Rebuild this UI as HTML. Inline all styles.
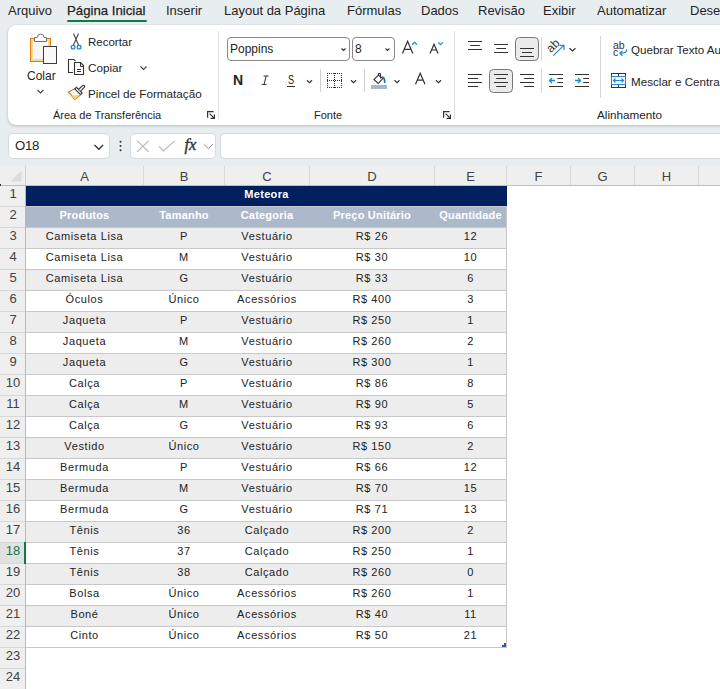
<!DOCTYPE html>
<html><head><meta charset="utf-8">
<style>
*{margin:0;padding:0;box-sizing:border-box}
html,body{width:720px;height:689px;overflow:hidden;background:#e8edf0;font-family:"Liberation Sans",sans-serif;color:#242424;position:relative}
.a{position:absolute;white-space:nowrap}
.tab{position:absolute;top:3px;font-size:13px;line-height:16px;color:#242424}
#ribbon{position:absolute;left:8px;top:25px;width:740px;height:100px;background:#fff;border-radius:8px;box-shadow:0 1px 3px rgba(0,0,0,.2),0 0 1px rgba(0,0,0,.12)}
.sep{position:absolute;width:1px;background:#e0e0e0}
.gl{position:absolute;top:108px;font-size:11px;line-height:14px;color:#242424}
.t12{font-size:12px;line-height:15px}
svg{position:absolute;overflow:visible}
#fbar{position:absolute;left:0;top:125px;width:720px;height:41px}
.box{position:absolute;background:#fff;border:1px solid #d6d9dc;border-radius:5px}
#colh{position:absolute;left:0;top:166px;width:720px;height:20px;background:#efefef;border-bottom:1px solid #bdbdbd}
.ch{position:absolute;top:0;height:19px;font-size:13px;line-height:22px;text-align:center;color:#424242;border-right:1px solid #d8d8d8}
#rowh{position:absolute;left:0;top:186px;width:26px;height:503px;background:#efefef;border-right:1px solid #b9b9b9}
.rh{position:absolute;left:0;width:25px;height:21px;font-size:13px;line-height:15px;text-align:center;padding-left:1px;color:#424242;border-bottom:1px solid #d8d8d8}
#grid{position:absolute;left:26px;top:186px;width:694px;height:503px;background:#fff}
.r{position:absolute;left:0;width:481px;height:21px;border-bottom:1px solid #c8c8c8;font-size:11px;line-height:16px;color:#222}
.r span{position:absolute;top:0;text-align:center;letter-spacing:.6px}
.g{background:#ededed}
</style></head><body>
<!-- tabs -->
<div class="tab" style="left:8px">Arquivo</div>
<div class="tab" style="left:67px;font-size:13.2px;-webkit-text-stroke:.25px #242424">Página Inicial</div>
<div class="a" style="left:67px;top:20px;width:80px;height:2px;background:#107c41;border-radius:1px"></div>
<div class="tab" style="left:166px">Inserir</div>
<div class="tab" style="left:224px">Layout da Página</div>
<div class="tab" style="left:347px">Fórmulas</div>
<div class="tab" style="left:421px">Dados</div>
<div class="tab" style="left:478px">Revisão</div>
<div class="tab" style="left:543px">Exibir</div>
<div class="tab" style="left:597px">Automatizar</div>
<div class="tab" style="left:690px">Desenhar</div>

<div id="ribbon"></div>
<!-- group: clipboard -->


<div class="a t12" style="left:27px;top:69px">Colar</div>
<div class="a t12" style="left:88px;top:35px;font-size:11.5px">Recortar</div>
<div class="a t12" style="left:88px;top:60px;font-size:11.7px">Copiar</div>
<div class="a t12" style="left:88px;top:86px;font-size:11.7px">Pincel de Formatação</div>
<div class="gl" style="left:53px">Área de Transferência</div>
<div class="sep" style="left:218px;top:31px;height:88px"></div>

<!-- group: font -->
<div class="box" style="left:227px;top:37px;width:123px;height:24px;border-color:#8a8a8a;border-radius:4px"></div>
<div class="a t12" style="left:230px;top:42px">Poppins</div>
<div class="box" style="left:352px;top:37px;width:43px;height:24px;border-color:#8a8a8a;border-radius:4px"></div>
<div class="a t12" style="left:355px;top:42px">8</div>
<div class="gl" style="left:314px">Fonte</div>
<div class="a" style="left:233px;top:72px;font-size:14px;font-weight:bold;line-height:16px">N</div>
<div class="a" style="left:287.6px;top:72px;font-size:13px;line-height:16px;transform:scaleX(.7);transform-origin:0 0">S</div>
<div class="sep" style="left:454px;top:31px;height:88px"></div>

<!-- group: alignment -->
<div class="a" style="left:631px;top:43px;font-size:11.6px">Quebrar Texto Automaticamente</div>
<div class="a" style="left:631px;top:75px;font-size:11.65px">Mesclar e Centralizar</div>
<div class="gl" style="left:597px;font-size:11.7px">Alinhamento</div>

<!-- formula bar -->
<div class="box" style="left:8px;top:133px;width:102px;height:26px"></div>
<div class="a" style="left:15px;top:138px;font-size:13.2px;letter-spacing:-.3px">O18</div>
<div class="box" style="left:130px;top:133px;width:86px;height:26px"></div>
<div class="box" style="left:220px;top:133px;width:520px;height:26px"></div>

<svg style="left:0;top:0" width="720" height="166" fill="none" stroke-linecap="butt">
<!-- clipboard -->
<rect x="30.6" y="38.6" width="19.8" height="22.8" stroke="#e07a10" stroke-width="1.2" fill="#f6f6f6"/>
<rect x="32" y="40" width="16.9" height="19.9" stroke="#f9d88a" stroke-width="1.8" fill="none"/>
<path d="M34.5 41.5V37.5H37.3A3.4 3.4 0 0 1 44.1 37.5H46.5V41.5Z" stroke="#6e6e6e" fill="#fff"/>
<rect x="43.5" y="46.5" width="13" height="17" stroke="#3c3c3c" fill="#f8f8f8"/>
<path d="M37.5 90L40.5 93L43.5 90" stroke="#444" stroke-width="1.1"/>
<path d="M140.5 66.5L143.5 69.5L146.5 66.5" stroke="#444" stroke-width="1.1"/>
<!-- scissors -->
<path d="M73.5 33.5L78.5 45M78.5 33.5L73.5 45" stroke="#444" stroke-width="1.1"/>
<rect x="71.3" y="45.3" width="3.6" height="3.6" rx="1.2" stroke="#1f87d6" stroke-width="1.3" fill="#dcecf8"/>
<rect x="77.3" y="45.3" width="3.6" height="3.6" rx="1.2" stroke="#1f87d6" stroke-width="1.3" fill="#dcecf8"/>
<!-- copy -->
<path d="M73 72.5H68.5V59.5H73.8L75.5 61.2" stroke="#333" stroke-width="1.1"/>
<path d="M74.5 62.5H80.5L83.5 65.5V74.5H74.5Z" stroke="#333" stroke-width="1.1" fill="#fafafa"/>
<path d="M80.5 62.5V66.5H83.5M77 69.5H81M77 71.5H81" stroke="#333" stroke-width="1"/>
<!-- brush -->
<path d="M68.5 92L74.8 88.8L80.6 94.6L74.8 99.3Z" stroke="#e07a10" stroke-width="1.2" fill="#fff"/>
<path d="M71.5 95.5L80 94.8L74.8 99.2Z" fill="#f8d57a" stroke="none"/>
<path d="M74.8 88.8L76.4 87.3L82.2 93.1L80.6 94.6Z" stroke="#333" stroke-width="1.1" fill="#fff"/>
<path d="M78.6 89.5L82.5 85.6A1.2 1.2 0 0 1 84.3 87.4L80.4 91.3" stroke="#333" stroke-width="1.1" fill="#fff"/>
<!-- launchers -->
<path d="M207.6 117.8V111.6H213.6M209.6 113.6L214.4 118.4M214.4 114.6V118.4H210.6" stroke="#333" stroke-width="1.2"/>
<path d="M443.6 117.8V111.6H449.6M445.6 113.6L450.4 118.4M450.4 114.6V118.4H446.6" stroke="#333" stroke-width="1.2"/>
<!-- font box chevrons -->
<path d="M341.5 48.5L343.5 50.5L345.5 48.5M385.5 48.5L387.5 50.5L389.5 48.5" stroke="#333" stroke-width="1.1"/>
<!-- grow/shrink -->
<path d="M402.4 53.5L407.6 41.3L412.8 53.5M404.5 49.4H410.7" stroke="#333" stroke-width="1.2"/>
<path d="M412 44.7L414.5 42.3L417 44.7" stroke="#1f87d6" stroke-width="1.2"/>
<path d="M430 53.5L434 44.3L438.1 53.5M431.6 50H436.5" stroke="#333" stroke-width="1.2"/>
<path d="M438.2 42.4L440.5 44.6L442.9 42.4" stroke="#1f87d6" stroke-width="1.2"/>
<path d="M263.6 76H268.6M261.6 84.4H266.6M266.1 76L264.1 84.4" stroke="#333" stroke-width="1"/>
<path d="M287 86.5H295" stroke="#333" stroke-width="1"/>
<!-- chevrons row2 -->
<path d="M307 80.3L309.5 82.6L312 80.3M351 80.3L353.5 82.6L356 80.3M394.5 80.3L397 82.6L399.5 80.3M436 80.3L438.5 82.6L441 80.3" stroke="#333" stroke-width="1.2"/>
<!-- separators row2 -->
<path d="M320.5 69V92M364.5 69V92" stroke="#d0d0d0"/>
<!-- borders icon -->
<path d="M327 73.5H342.5M327 87.5H342.5M327 80.5H342.5M327.5 73V88M341.5 73V88M334.5 73V88" stroke="#333" stroke-dasharray="1 1"/>
<!-- fill icon -->
<path d="M383 78.3L378.2 83.5L373.9 79.5L378.4 75.2Z" stroke="#333" stroke-width="1.1" fill="#fff"/>
<path d="M378.4 76V74.4A1.05 1.05 0 0 1 380.5 74.4V78.4" stroke="#333" stroke-width="1.1"/>
<path d="M382.3 77.2Q384.9 77.4 384.7 83" stroke="#1f6fc0" stroke-width="1.7"/>
<rect x="371" y="85" width="16" height="4" fill="#aab6c9"/>
<!-- font color A -->
<path d="M415.5 84.2L420.2 73.2L425 84.2M417.3 80.2H423.2" stroke="#333" stroke-width="1.2"/>
<!-- align top row -->
<path d="M468 41.5H482M470.3 45.5H479.8M468 49.5H482M494 44.5H508M496.3 48.5H506M494 52.5H508" stroke="#333"/>
<rect x="515.5" y="37.5" width="23" height="23" rx="4" fill="#ebebeb" stroke="#767676"/>
<path d="M520 48.5H534M522 52.5H532M520 56.5H534" stroke="#333"/>
<rect x="489.5" y="69.5" width="23" height="23" rx="4" fill="#ebebeb" stroke="#767676"/>
<path d="M468 74.5H482M468 78.5H478M468 82.5H482M468 86.5H478" stroke="#333"/>
<path d="M494 74.5H508M496.2 78.5H506M494 82.5H508M496.2 86.5H506" stroke="#333"/>
<path d="M520 74.5H534M524.2 78.5H534M520 82.5H534M524.2 86.5H534" stroke="#333"/>
<path d="M541.5 37V61M541.5 69V93M600.5 36V98" stroke="#d6d6d6"/>
<!-- orientation -->
<text x="0" y="0" transform="translate(551 53.2) rotate(-45)" font-family="Liberation Sans" font-size="12" fill="#333" stroke="none">ab</text>
<path d="M553.3 55.6L563.6 45.6M559.5 45.3H564V49.8" stroke="#1f87d6" stroke-width="1.2"/>
<path d="M569.5 48.3L572.5 51L575.5 48.3" stroke="#333" stroke-width="1.2"/>
<!-- indents -->
<path d="M549 74.5H563M557.3 78.5H563M557.3 82.5H563M549 86.5H563M575 74.5H589M583.2 78.5H589M583.2 82.5H589M575 86.5H589" stroke="#333"/>
<path d="M549.5 80.5H555M552 78L549.5 80.5L552 83M575 80.5H580.5M578 78L580.5 80.5L578 83" stroke="#1f87d6" stroke-width="1.3"/>
<!-- wrap -->
<text x="613" y="48.6" font-family="Liberation Sans" font-size="10.5" fill="#333" stroke="none">ab</text>
<text x="613" y="55.6" font-family="Liberation Sans" font-size="10.5" fill="#333" stroke="none">c</text>
<path d="M626.5 49.3Q627.5 53.3 620.3 53.3M622.5 50.8L620 53.3L622.5 55.8" stroke="#1f87d6" stroke-width="1.3"/>
<!-- merge -->
<rect x="611.5" y="73.5" width="14" height="14" stroke="#333" fill="#fff"/>
<path d="M618.5 73.5V76.5M618.5 84.5V87.5" stroke="#333"/>
<rect x="611.5" y="76.5" width="14" height="8" stroke="#1f87d6" fill="#fff"/>
<path d="M613.5 80.5H623.5M615.5 78.5L613.5 80.5L615.5 82.5M621.5 78.5L623.5 80.5L621.5 82.5" stroke="#1f87d6" stroke-width="1.2"/>
<!-- formula bar icons -->
<path d="M94.5 145L98.8 149.3L103.1 145" stroke="#333" stroke-width="1.3"/>
<circle cx="120.5" cy="141.8" r="1" fill="#333" stroke="none"/>
<circle cx="120.5" cy="146" r="1" fill="#333" stroke="none"/>
<circle cx="120.5" cy="150.2" r="1" fill="#333" stroke="none"/>
<path d="M137 140.7L148.8 152M148.8 140.7L137 152" stroke="#b8b8b8" stroke-width="1.1"/>
<path d="M159 146.5L163.5 151L175 140.7" stroke="#b8b8b8" stroke-width="1.1"/>
<text x="184.5" y="149.6" font-family="Liberation Serif" font-style="italic" font-size="16.5" stroke="#333" stroke-width=".4" fill="#333">fx</text>
<path d="M203.7 144L208.4 148.6L213.1 144" stroke="#8a8a8a" stroke-width="0.9"/>
</svg>
<!-- column headers -->
<div id="colh"><div class="ch" style="left:26px;width:118px">A</div><div class="ch" style="left:144px;width:81px">B</div><div class="ch" style="left:225px;width:85px">C</div><div class="ch" style="left:310px;width:125px">D</div><div class="ch" style="left:435px;width:72px">E</div><div class="ch" style="left:507px;width:64px">F</div><div class="ch" style="left:571px;width:64px">G</div><div class="ch" style="left:635px;width:64px">H</div><div class="ch" style="left:699px;width:61px">I</div><div class="a" style="left:25px;top:0;width:1px;height:19px;background:#d0d0d0"></div><svg style="left:0;top:0" width="26" height="20"><path d="M10.5 15.5L21.5 4.5V15.5Z" fill="#dcdcdc"/></svg><div class="a" style="left:0;top:18px;width:1px;height:2px;background:#333"></div></div>
<div id="rowh"><div class="rh" style="top:0px">1</div><div class="rh" style="top:21px">2</div><div class="rh" style="top:42px">3</div><div class="rh" style="top:63px">4</div><div class="rh" style="top:84px">5</div><div class="rh" style="top:105px">6</div><div class="rh" style="top:126px">7</div><div class="rh" style="top:147px">8</div><div class="rh" style="top:168px">9</div><div class="rh" style="top:189px">10</div><div class="rh" style="top:210px">11</div><div class="rh" style="top:231px">12</div><div class="rh" style="top:252px">13</div><div class="rh" style="top:273px">14</div><div class="rh" style="top:294px">15</div><div class="rh" style="top:315px">16</div><div class="rh" style="top:336px">17</div><div class="rh" style="top:357px;background:#e1e1e1;color:#107c41">18</div><div class="rh" style="top:378px">19</div><div class="rh" style="top:399px">20</div><div class="rh" style="top:420px">21</div><div class="rh" style="top:441px">22</div><div class="rh" style="top:462px">23</div><div class="rh" style="top:483px">24</div></div>
<div id="grid"><div class="r" style="top:0;background:#002060;height:21px;border-bottom:1px solid #c8c8c8;width:481px"><span style="left:0;width:481px;color:#fff;font-weight:bold;letter-spacing:.3px">Meteora</span></div><div class="r" style="top:21px;background:#acb9ca;border-right:1px solid #c8c8c8"><span style="left:0px;width:117px;color:#fff;font-weight:bold;letter-spacing:.2px">Produtos</span><span style="left:118px;width:80px;color:#fff;font-weight:bold;letter-spacing:.2px">Tamanho</span><span style="left:199px;width:84px;color:#fff;font-weight:bold;letter-spacing:.2px">Categoria</span><span style="left:284px;width:124px;color:#fff;font-weight:bold;letter-spacing:.2px">Preço Unitário</span><span style="left:409px;width:71px;color:#fff;font-weight:bold;letter-spacing:.2px">Quantidade</span></div><div class="r g" style="top:42px;border-right:1px solid #c8c8c8"><span style="left:0px;width:117px">Camiseta Lisa</span><span style="left:118px;width:80px">P</span><span style="left:199px;width:84px">Vestuário</span><span style="left:284px;width:124px">R$ 26</span><span style="left:409px;width:71px">12</span></div><div class="r" style="top:63px;border-right:1px solid #c8c8c8"><span style="left:0px;width:117px">Camiseta Lisa</span><span style="left:118px;width:80px">M</span><span style="left:199px;width:84px">Vestuário</span><span style="left:284px;width:124px">R$ 30</span><span style="left:409px;width:71px">10</span></div><div class="r g" style="top:84px;border-right:1px solid #c8c8c8"><span style="left:0px;width:117px">Camiseta Lisa</span><span style="left:118px;width:80px">G</span><span style="left:199px;width:84px">Vestuário</span><span style="left:284px;width:124px">R$ 33</span><span style="left:409px;width:71px">6</span></div><div class="r" style="top:105px;border-right:1px solid #c8c8c8"><span style="left:0px;width:117px">Óculos</span><span style="left:118px;width:80px">Único</span><span style="left:199px;width:84px">Acessórios</span><span style="left:284px;width:124px">R$ 400</span><span style="left:409px;width:71px">3</span></div><div class="r g" style="top:126px;border-right:1px solid #c8c8c8"><span style="left:0px;width:117px">Jaqueta</span><span style="left:118px;width:80px">P</span><span style="left:199px;width:84px">Vestuário</span><span style="left:284px;width:124px">R$ 250</span><span style="left:409px;width:71px">1</span></div><div class="r" style="top:147px;border-right:1px solid #c8c8c8"><span style="left:0px;width:117px">Jaqueta</span><span style="left:118px;width:80px">M</span><span style="left:199px;width:84px">Vestuário</span><span style="left:284px;width:124px">R$ 260</span><span style="left:409px;width:71px">2</span></div><div class="r g" style="top:168px;border-right:1px solid #c8c8c8"><span style="left:0px;width:117px">Jaqueta</span><span style="left:118px;width:80px">G</span><span style="left:199px;width:84px">Vestuário</span><span style="left:284px;width:124px">R$ 300</span><span style="left:409px;width:71px">1</span></div><div class="r" style="top:189px;border-right:1px solid #c8c8c8"><span style="left:0px;width:117px">Calça</span><span style="left:118px;width:80px">P</span><span style="left:199px;width:84px">Vestuário</span><span style="left:284px;width:124px">R$ 86</span><span style="left:409px;width:71px">8</span></div><div class="r g" style="top:210px;border-right:1px solid #c8c8c8"><span style="left:0px;width:117px">Calça</span><span style="left:118px;width:80px">M</span><span style="left:199px;width:84px">Vestuário</span><span style="left:284px;width:124px">R$ 90</span><span style="left:409px;width:71px">5</span></div><div class="r" style="top:231px;border-right:1px solid #c8c8c8"><span style="left:0px;width:117px">Calça</span><span style="left:118px;width:80px">G</span><span style="left:199px;width:84px">Vestuário</span><span style="left:284px;width:124px">R$ 93</span><span style="left:409px;width:71px">6</span></div><div class="r g" style="top:252px;border-right:1px solid #c8c8c8"><span style="left:0px;width:117px">Vestido</span><span style="left:118px;width:80px">Único</span><span style="left:199px;width:84px">Vestuário</span><span style="left:284px;width:124px">R$ 150</span><span style="left:409px;width:71px">2</span></div><div class="r" style="top:273px;border-right:1px solid #c8c8c8"><span style="left:0px;width:117px">Bermuda</span><span style="left:118px;width:80px">P</span><span style="left:199px;width:84px">Vestuário</span><span style="left:284px;width:124px">R$ 66</span><span style="left:409px;width:71px">12</span></div><div class="r g" style="top:294px;border-right:1px solid #c8c8c8"><span style="left:0px;width:117px">Bermuda</span><span style="left:118px;width:80px">M</span><span style="left:199px;width:84px">Vestuário</span><span style="left:284px;width:124px">R$ 70</span><span style="left:409px;width:71px">15</span></div><div class="r" style="top:315px;border-right:1px solid #c8c8c8"><span style="left:0px;width:117px">Bermuda</span><span style="left:118px;width:80px">G</span><span style="left:199px;width:84px">Vestuário</span><span style="left:284px;width:124px">R$ 71</span><span style="left:409px;width:71px">13</span></div><div class="r g" style="top:336px;border-right:1px solid #c8c8c8"><span style="left:0px;width:117px">Tênis</span><span style="left:118px;width:80px">36</span><span style="left:199px;width:84px">Calçado</span><span style="left:284px;width:124px">R$ 200</span><span style="left:409px;width:71px">2</span></div><div class="r" style="top:357px;border-right:1px solid #c8c8c8"><span style="left:0px;width:117px">Tênis</span><span style="left:118px;width:80px">37</span><span style="left:199px;width:84px">Calçado</span><span style="left:284px;width:124px">R$ 250</span><span style="left:409px;width:71px">1</span></div><div class="r g" style="top:378px;border-right:1px solid #c8c8c8"><span style="left:0px;width:117px">Tênis</span><span style="left:118px;width:80px">38</span><span style="left:199px;width:84px">Calçado</span><span style="left:284px;width:124px">R$ 260</span><span style="left:409px;width:71px">0</span></div><div class="r" style="top:399px;border-right:1px solid #c8c8c8"><span style="left:0px;width:117px">Bolsa</span><span style="left:118px;width:80px">Único</span><span style="left:199px;width:84px">Acessórios</span><span style="left:284px;width:124px">R$ 260</span><span style="left:409px;width:71px">1</span></div><div class="r g" style="top:420px;border-right:1px solid #c8c8c8"><span style="left:0px;width:117px">Boné</span><span style="left:118px;width:80px">Único</span><span style="left:199px;width:84px">Acessórios</span><span style="left:284px;width:124px">R$ 40</span><span style="left:409px;width:71px">11</span></div><div class="r" style="top:441px;border-right:1px solid #c8c8c8"><span style="left:0px;width:117px">Cinto</span><span style="left:118px;width:80px">Único</span><span style="left:199px;width:84px">Acessórios</span><span style="left:284px;width:124px">R$ 50</span><span style="left:409px;width:71px">21</span></div><div class="a" style="left:476px;top:457px;width:4px;height:4px;background:#3a4fb5;clip-path:polygon(50% 0,100% 0,100% 100%,0 100%,0 50%,50% 50%)"></div></div>
<div class="a" style="left:24px;top:542px;width:2px;height:22px;background:#107c41"></div>
</body></html>
